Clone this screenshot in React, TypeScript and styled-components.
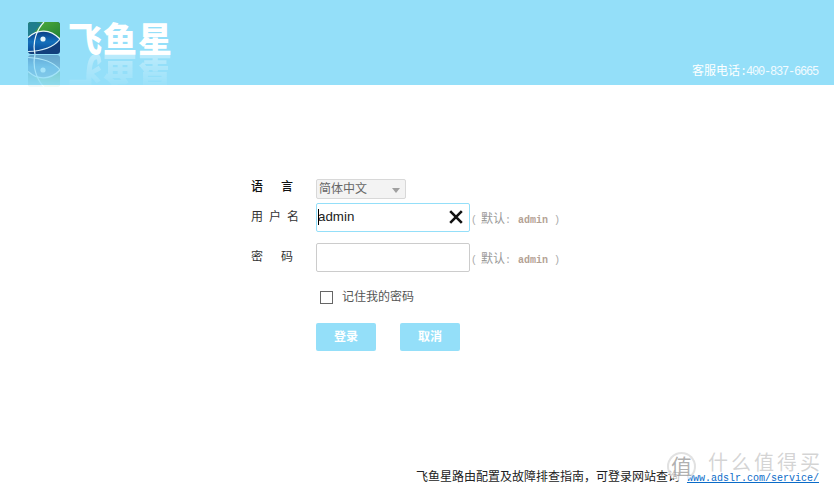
import React from 'react';
import styled, { createGlobalStyle } from 'styled-components';

const GlobalStyle = createGlobalStyle`
  html, body {
    margin: 0;
    padding: 0;
    background: #fff;
  }
  body {
    font-family: "Liberation Sans", "Noto Sans CJK SC", sans-serif;
    overflow: hidden;
  }
`;

const Page = styled.div`
  position: relative;
  display: flex;
  flex-direction: column;
  width: 834px;
  height: 491px;
  overflow: hidden;
`;

const Header = styled.header`
  display: flex;
  justify-content: space-between;
  height: 85px;
  padding: 22px 15px 0 28px;
  box-sizing: border-box;
  background: #94dff9;
`;

const LogoWrap = styled.div`
  display: flex;
  flex-direction: column;
`;

const LogoRow = styled.div`
  display: flex;
  align-items: center;
  gap: 8px;
  height: 32px;
`;

const LogoReflection = styled(LogoRow)`
  margin-top: 1px;
  transform: scaleY(-1);
  opacity: 0.36;
  -webkit-mask-image: linear-gradient(to top, #000 0%, rgba(0, 0, 0, 0.12) 100%);
  mask-image: linear-gradient(to top, #000 0%, rgba(0, 0, 0, 0.12) 100%);
`;

const LogoText = styled.div`
  height: 32px;
  font-family: "Noto Sans CJK SC", sans-serif;
  font-size: 34px;
  font-weight: 900;
  line-height: 32px;
  letter-spacing: 1px;
  color: #fff;
`;

const Hotline = styled.div`
  align-self: flex-end;
  margin-bottom: 5px;
  font-size: 12px;
  line-height: 16px;
  color: #fff;
`;

const HotlineNumber = styled.span`
  font-family: "Liberation Mono", monospace;
  font-size: 12px;
  letter-spacing: -1.2px;
  margin-right: 1px;
  color: #f2fbff;
`;

const Form = styled.form`
  display: grid;
  grid-template-columns: 65px 154px auto;
  grid-auto-rows: min-content;
  align-items: center;
  margin: 94px 0 0 251px;
`;

const Label = styled.label<{ $strong?: boolean }>`
  font-family: "Liberation Mono", "Noto Sans CJK SC", monospace;
  font-size: 12px;
  line-height: 16px;
  word-spacing: -1.2px;
  white-space: pre;
  color: ${(p) => (p.$strong ? '#111' : '#333')};
`;

const TopLabel = styled(Label)`
  margin-bottom: 2px;
  font-weight: 500;
`;

const Select = styled.div`
  display: flex;
  align-items: center;
  justify-content: space-between;
  width: 90px;
  height: 20px;
  padding: 0 5px 4px 2px;
  box-sizing: border-box;
  border: 1px solid #d8d8d8;
  border-radius: 2px;
  background: #f3f3f3;
  font-size: 12px;
  color: #666;
`;

const Caret = styled.span`
  width: 0;
  height: 0;
  margin-top: 6px;
  border-left: 4px solid transparent;
  border-right: 4px solid transparent;
  border-top: 5px solid #a0a0a0;
`;

const Field = styled.div<{ $focus?: boolean }>`
  display: flex;
  align-items: center;
  justify-content: space-between;
  width: 154px;
  height: 29px;
  padding: 0 6px 2px 1px;
  box-sizing: border-box;
  border: 1px solid ${(p) => (p.$focus ? '#94dff9' : '#ccc')};
  border-radius: 2px;
  background: #fff;
  font-size: 13.33px;
  color: #222;
`;

const Value = styled.span`
  position: relative;
  &::before {
    content: '';
    position: absolute;
    left: 0;
    top: 0;
    width: 1px;
    height: 16px;
    background: #000;
  }
`;

const Hint = styled.span`
  padding-left: 1px;
  font-family: "Liberation Mono", monospace;
  font-size: 10px;
  white-space: pre;
  color: #aaa;
`;

const HintCjk = styled.span`
  margin-left: 4px;
  font-family: "Noto Sans CJK SC", sans-serif;
  font-size: 12px;
  color: #999;
`;

const HintCode = styled.span`
  margin-left: 1px;
  font-weight: 700;
  color: #b4a294;
`;

const RowGap = styled.div<{ $size: number }>`
  grid-column: 1 / -1;
  height: ${(p) => p.$size}px;
`;

const Remember = styled.div`
  grid-column: 2 / -1;
  display: flex;
  align-items: center;
  gap: 9px;
  height: 16px;
  margin: 17px 0 0 4px;
  font-size: 12px;
  color: #555;
`;

const RememberText = styled.span`
  margin-bottom: 3px;
`;

const Box = styled.span`
  width: 11px;
  height: 11px;
  border: 1px solid #666;
`;

const Buttons = styled.div`
  grid-column: 2 / -1;
  display: flex;
  gap: 24px;
  margin-top: 18px;
`;

const Button = styled.button`
  width: 60px;
  height: 28px;
  padding: 0 0 3px;
  border: none;
  border-radius: 2px;
  background: #94dff9;
  font-family: "Noto Sans CJK SC", sans-serif;
  font-size: 12px;
  font-weight: 700;
  color: #fff;
`;

const Footer = styled.div`
  display: flex;
  justify-content: flex-end;
  align-items: baseline;
  margin-top: auto;
  padding: 0 15px 4px 0;
  font-size: 12px;
  line-height: 16px;
  white-space: nowrap;
  color: #222;
`;

const FooterLink = styled.a`
  margin-left: 7px;
  font-family: "Liberation Mono", monospace;
  font-size: 10px;
  color: #0a6bc8;
  text-decoration: underline;
`;

const Watermark = styled.div`
  position: absolute;
  right: 11px;
  bottom: 10px;
  display: flex;
  align-items: flex-start;
  gap: 12px;
  font-size: 20px;
  line-height: 22px;
  letter-spacing: 3px;
  color: rgba(170, 170, 170, 0.5);
`;

const WatermarkBadge = styled.span`
  display: flex;
  align-items: center;
  justify-content: center;
  width: 29px;
  height: 29px;
  box-sizing: border-box;
  border: 2px solid rgba(195, 195, 195, 0.5);
  border-bottom-color: transparent;
  border-radius: 50%;
  background: rgba(255, 255, 255, 0.72);
  font-size: 21px;
  letter-spacing: 0;
  color: rgba(150, 150, 150, 0.75);
`;

function LogoMark({ id }: { id: string }) {
  return (
    <svg width="32" height="32" viewBox="0 0 32 32">
      <defs>
        <linearGradient id={`${id}-eye`} x1="0" y1="0" x2="0" y2="1">
          <stop offset="0" stopColor="#0a3f86" />
          <stop offset="0.5" stopColor="#1470bb" />
          <stop offset="1" stopColor="#0b4a96" />
        </linearGradient>
        <linearGradient id={`${id}-green`} x1="0" y1="0" x2="1" y2="1">
          <stop offset="0" stopColor="#55b13c" />
          <stop offset="1" stopColor="#217f35" />
        </linearGradient>
        <clipPath id={`${id}-round`}>
          <rect width="32" height="32" rx="3" />
        </clipPath>
      </defs>
      <g clipPath={`url(#${id}-round)`}>
        <rect width="32" height="32" fill="#123f7c" />
        <path d="M0 0H32V17C24 9 12 7 0 15Z" fill={`url(#${id}-green)`} />
        <path d="M0 0H8L15 1C11 4 9 7 7 10L0 15Z" fill="#1f7d8c" />
        <path d="M0 15C10 7 22 8 32 17C26 26 10 30 0 30Z" fill={`url(#${id}-eye)`} />
        <path d="M0 15.5C10 6.5 22 7 32 17" fill="none" stroke="#e8f6fa" strokeWidth="1.3" />
        <path d="M0 29.5C12 29 25 26 32 17" fill="none" stroke="#d8eef6" strokeWidth="1.1" />
        <path d="M16 0C9 7 4 20 7 32" fill="none" stroke="#e8f6fa" strokeWidth="1.2" />
        <circle cx="15" cy="17" r="2.6" fill="#e4f5fb" />
      </g>
    </svg>
  );
}

function CloseMark() {
  return (
    <svg width="14" height="14" viewBox="0 0 14 14">
      <path d="M1.2 1.2L12.8 12.8M12.8 1.2L1.2 12.8" stroke="#111" strokeWidth="2.6" />
    </svg>
  );
}

function DefaultHint() {
  return (
    <Hint>
      (
      <HintCjk>默认</HintCjk>
      {': '}
      <HintCode>admin</HintCode>
      {' )'}
    </Hint>
  );
}

export default function App() {
  return (
    <Page>
      <GlobalStyle />
      <Header>
        <LogoWrap>
          <LogoRow>
            <LogoMark id="logo" />
            <LogoText>飞鱼星</LogoText>
          </LogoRow>
          <LogoReflection aria-hidden>
            <LogoMark id="reflection" />
            <LogoText>飞鱼星</LogoText>
          </LogoReflection>
        </LogoWrap>
        <Hotline>
          客服电话<HotlineNumber>:400-837-6665</HotlineNumber>
        </Hotline>
      </Header>
      <Form>
        <TopLabel $strong>{'语   言'}</TopLabel>
        <Select>
          简体中文
          <Caret />
        </Select>
        <span />
        <RowGap $size={4} />
        <Label>{'用 户 名'}</Label>
        <Field $focus>
          <Value>admin</Value>
          <CloseMark />
        </Field>
        <DefaultHint />
        <RowGap $size={11} />
        <Label>{'密   码'}</Label>
        <Field />
        <DefaultHint />
        <Remember>
          <Box />
          <RememberText>记住我的密码</RememberText>
        </Remember>
        <Buttons>
          <Button type="button">登录</Button>
          <Button type="button">取消</Button>
        </Buttons>
      </Form>
      <Footer>
        飞鱼星路由配置及故障排查指南，可登录网站查询
        <FooterLink>www.adslr.com/service/</FooterLink>
      </Footer>
      <Watermark>
        <WatermarkBadge>值</WatermarkBadge>
        什么值得买
      </Watermark>
    </Page>
  );
}
